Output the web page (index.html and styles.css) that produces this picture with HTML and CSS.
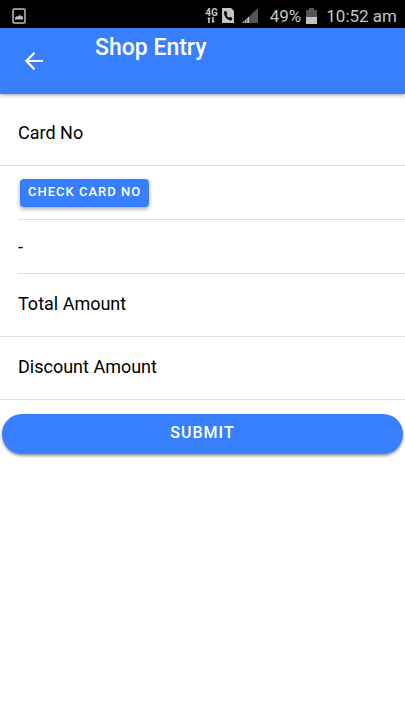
FILE: index.html
```html
<!DOCTYPE html>
<html lang="en">
<head>
<meta charset="utf-8">
<meta name="viewport" content="width=device-width, initial-scale=1">
<title>Shop Entry</title>
<link rel="stylesheet" href="styles.css">
</head>
<body>
<div class="status">
  <svg class="picture" width="14" height="16" viewBox="0 0 14 16" aria-hidden="true"><rect x="1" y="1" width="12" height="14" rx="1" fill="none" stroke="#bdbdbd" stroke-width="1.5"/><path d="M3 11.500V9.500l2-1.500 1 .8 1.500-2 1.500 1.500 1-.5 1 1.700v2z" fill="#bdbdbd"/></svg>
  <span class="network"><span>4G</span>
    <svg width="8" height="6" viewBox="0 0 8 6" aria-hidden="true"><path d="M2 0 0 2h1.200v4h1.600V2H4zM6 6 4 4h1.200V0h1.600v4H8z" fill="#c4c4c4"/></svg>
  </span>
  <svg class="call" width="12" height="15" viewBox="0 0 12 15" aria-hidden="true"><path d="M0 0h9l3 3v12H0z" fill="#c4c4c4"/><path d="M2 3.500C1.500 8 5 12.500 9.500 12.500l1-2.200-2.300-1.500-1.300.9C5.700 9 5 8 4.500 6.800l1-1.100L4.300 3z" fill="#000"/></svg>
  <svg class="signal" width="16" height="15" viewBox="0 0 16 15" aria-hidden="true"><path d="M16 0v15H0z" fill="#555"/><path d="M7 8.400V15H0z" fill="#c4c4c4"/><path d="M2.500 11v4M4.800 9v6" stroke="#000" stroke-width=".6"/></svg>
  <span>49%</span>
  <svg class="battery" width="11" height="16" viewBox="0 0 11 16" aria-hidden="true"><path d="M3 0h5v2h3v7H0V2h3z" fill="#555"/><path d="M0 9h11v7H0z" fill="#c4c4c4"/></svg>
  <time>10:52 am</time>
</div>
<header class="toolbar">
  <button class="back" type="button" aria-label="Back"><svg width="18" height="18" viewBox="0 0 18 18" fill="none" stroke="#fff" stroke-width="2.200" aria-hidden="true"><path d="M18 9H1.500M9.500 .7 1.300 9l8.200 8.300"/></svg></button>
  <h1>Shop Entry</h1>
</header>
<main>
  <form>
    <div class="field"><label for="card">Card No</label><input id="card" type="text"></div>
    <div class="item"><button class="check" type="button">Check Card No</button></div>
    <div class="item"><output for="card">-</output></div>
    <div class="field"><label for="total">Total Amount</label><input id="total" type="text"></div>
    <div class="field"><label for="discount">Discount Amount</label><input id="discount" type="text"></div>
    <button class="submit" type="submit">Submit</button>
  </form>
</main>
</body>
</html>
```
FILE: styles.css
```css
* { box-sizing: border-box; }
body {
  margin: 0;
  background: #fff;
  color: #000;
  font: 18px/24px Roboto, sans-serif;
}
button {
  border: 0;
  background: #387ffe;
  color: #fff;
  font-family: inherit;
  font-weight: 500;
  text-transform: uppercase;
}
.status {
  display: flex;
  align-items: center;
  height: 28px;
  padding: 3px 8px 0 12px;
  background: #000;
  color: #c4c4c4;
  font-size: 17px;
}
.picture { margin-right: auto; }
.network {
  display: flex;
  flex-direction: column;
  align-items: center;
  margin-right: 4px;
  font-size: 10px;
  font-weight: 700;
  line-height: 9px;
}
.call { margin-right: 8px; }
.signal { margin-right: 12px; }
.battery { margin: 0 9px 0 5px; }
.toolbar {
  display: flex;
  align-items: center;
  height: 66px;
  padding-left: 16px;
  background: #387ffe;
  color: #fff;
  box-shadow: 0 1px 4px rgba(0, 0, 0, .4);
}
.back {
  display: flex;
  width: 36px;
  height: 36px;
  padding: 9px;
}
h1 {
  align-self: flex-start;
  margin: 8px 0 0 43px;
  font-size: 23px;
  font-weight: 500;
  line-height: 24px;
}
form {
  display: flex;
  flex-direction: column;
  padding-top: 9px;
}
.field {
  display: flex;
  align-items: center;
  height: 63px;
  padding: 0 18px 2px;
  border-bottom: 1px solid #dedede;
}
.field input {
  flex: 1;
  min-width: 0;
  border: 0;
  outline: 0;
  background: transparent;
  font: inherit;
}
.item {
  display: flex;
  align-items: center;
  height: 54px;
  margin-left: 18px;
  border-bottom: 1px solid #dedede;
}
.check {
  height: 28px;
  margin-left: 2px;
  padding: 0 8px 3px;
  border-radius: 4px;
  box-shadow: 0 2px 4px rgba(0, 0, 0, .35);
  font-size: 13px;
  letter-spacing: 1px;
}
.submit {
  height: 40px;
  margin: 14px 2px;
  padding-bottom: 4px;
  border-radius: 20px;
  box-shadow: 0 2px 3px rgba(0, 0, 0, .4);
  font-size: 16px;
  letter-spacing: 1px;
}
```
